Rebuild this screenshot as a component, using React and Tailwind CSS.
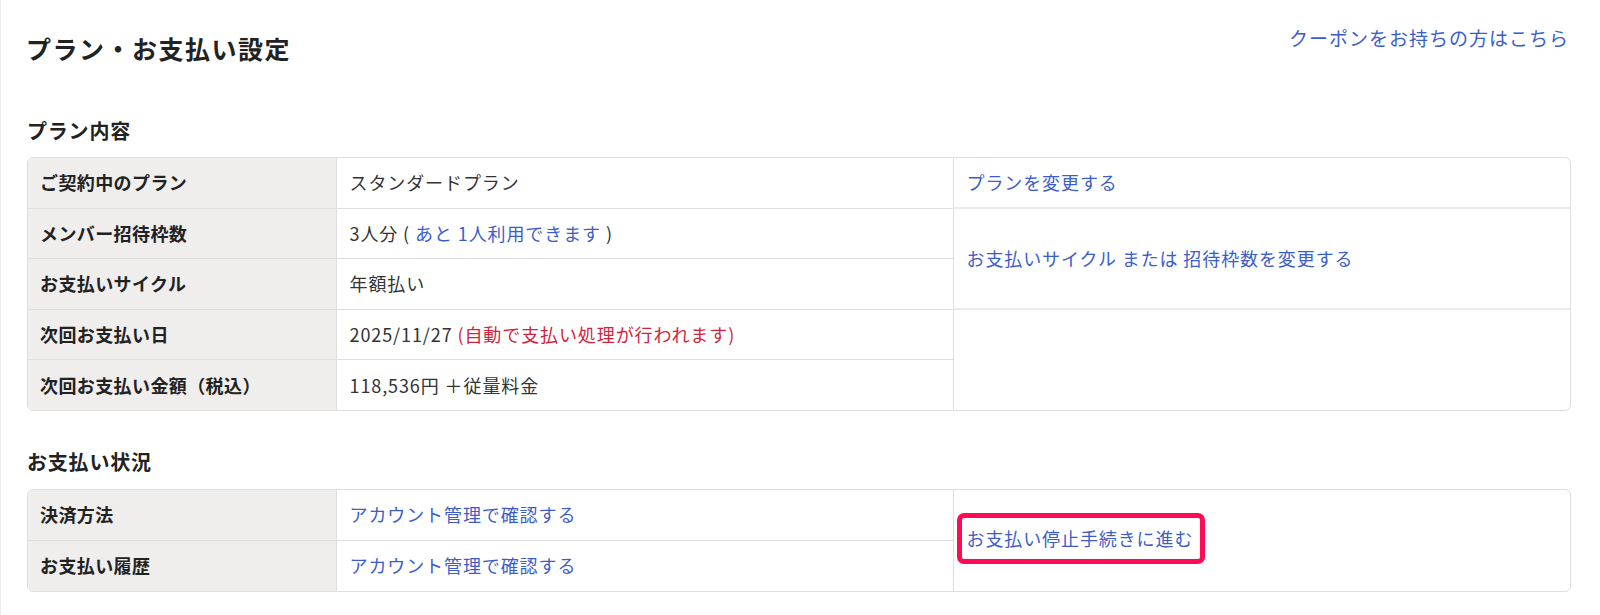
import React from 'react'

const font = { fontFamily: '"Noto Sans CJK JP", "Noto Sans", sans-serif' }

const labelCls = 'h-[50.4px] w-[308px] border-b border-r border-[#dedede] bg-[#efeeed] pl-[12px] text-left align-middle text-[18px] font-bold tracking-[0.4px] text-[#222]'
const valueCls = 'h-[50.4px] w-[617px] border-b border-r border-[#dedede] pl-[13px] align-middle text-[18px] tracking-[0.9px] text-[#333]'
const actionCls = 'border-b-2 border-[#ebebeb] pl-[13px] align-middle text-[18px] tracking-[0.9px] text-[#3b5dcc]'

function Link({ children }) {
  return <a href="#" className="text-[#3b5dcc]">{children}</a>
}

function SectionTitle({ children }) {
  return <h2 className="text-[20px] font-bold leading-[20px] tracking-[0.8px] text-[#222]">{children}</h2>
}

export default function App() {
  return (
    <div style={font} className="min-h-[615px] w-[1600px] border-l border-[#ececec] bg-white">
      <div className="flex items-start justify-between pl-[25px] pr-[31px] pt-[34px]">
        <h1 className="text-[25px] font-bold leading-[28px] tracking-[1.5px] text-[#222]">プラン・お支払い設定</h1>
        <a href="#" className="-mt-[10px] text-[19px] leading-[28px] tracking-[1px] text-[#3b5dcc]">クーポンをお持ちの方はこちら</a>
      </div>

      <div className="pl-[26px] pt-[59px]">
        <SectionTitle>プラン内容</SectionTitle>
        <div className="mt-[16px] w-[1544px] overflow-hidden rounded-[6px] border border-[#dedede]">
          <table className="w-full border-collapse">
            <tbody>
              <tr>
                <th className={labelCls}>ご契約中のプラン</th>
                <td className={valueCls}>スタンダードプラン</td>
                <td className={actionCls}><Link>プランを変更する</Link></td>
              </tr>
              <tr>
                <th className={labelCls}>メンバー招待枠数</th>
                <td className={valueCls}>
                  3人分 ( <Link>あと 1人利用できます</Link> )
                </td>
                <td rowSpan={2} className={actionCls}>
                  <Link>お支払いサイクル または 招待枠数を変更する</Link>
                </td>
              </tr>
              <tr>
                <th className={labelCls}>お支払いサイクル</th>
                <td className={valueCls}>年額払い</td>
              </tr>
              <tr>
                <th className={labelCls}>次回お支払い日</th>
                <td className={valueCls}>
                  2025/11/27 <span className="text-[#d0243d]">(自動で支払い処理が行われます)</span>
                </td>
                <td rowSpan={2} className="align-middle"></td>
              </tr>
              <tr>
                <th className={labelCls + ' border-b-0'}>次回お支払い金額（税込）</th>
                <td className={valueCls + ' border-b-0'}>118,536円 ＋従量料金</td>
              </tr>
            </tbody>
          </table>
        </div>

        <div className="pt-[41px]">
          <SectionTitle>お支払い状況</SectionTitle>
        </div>
        <div className="mt-[17px] w-[1544px] overflow-hidden rounded-[6px] border border-[#dedede]">
          <table className="w-full border-collapse">
            <tbody>
              <tr>
                <th className={labelCls}>決済方法</th>
                <td className={valueCls}><Link>アカウント管理で確認する</Link></td>
                <td rowSpan={2} className="pl-[3px] align-middle text-[18px] tracking-[0.9px]">
                  <span className="-mt-[3px] inline-block rounded-[7px] border-[5px] border-[#ff0b55] pl-[5px] pr-[7px] py-[8px] leading-[25px]">
                    <Link>お支払い停止手続きに進む</Link>
                  </span>
                </td>
              </tr>
              <tr>
                <th className={labelCls + ' border-b-0'}>お支払い履歴</th>
                <td className={valueCls + ' border-b-0'}><Link>アカウント管理で確認する</Link></td>
              </tr>
            </tbody>
          </table>
        </div>
      </div>
    </div>
  )
}
